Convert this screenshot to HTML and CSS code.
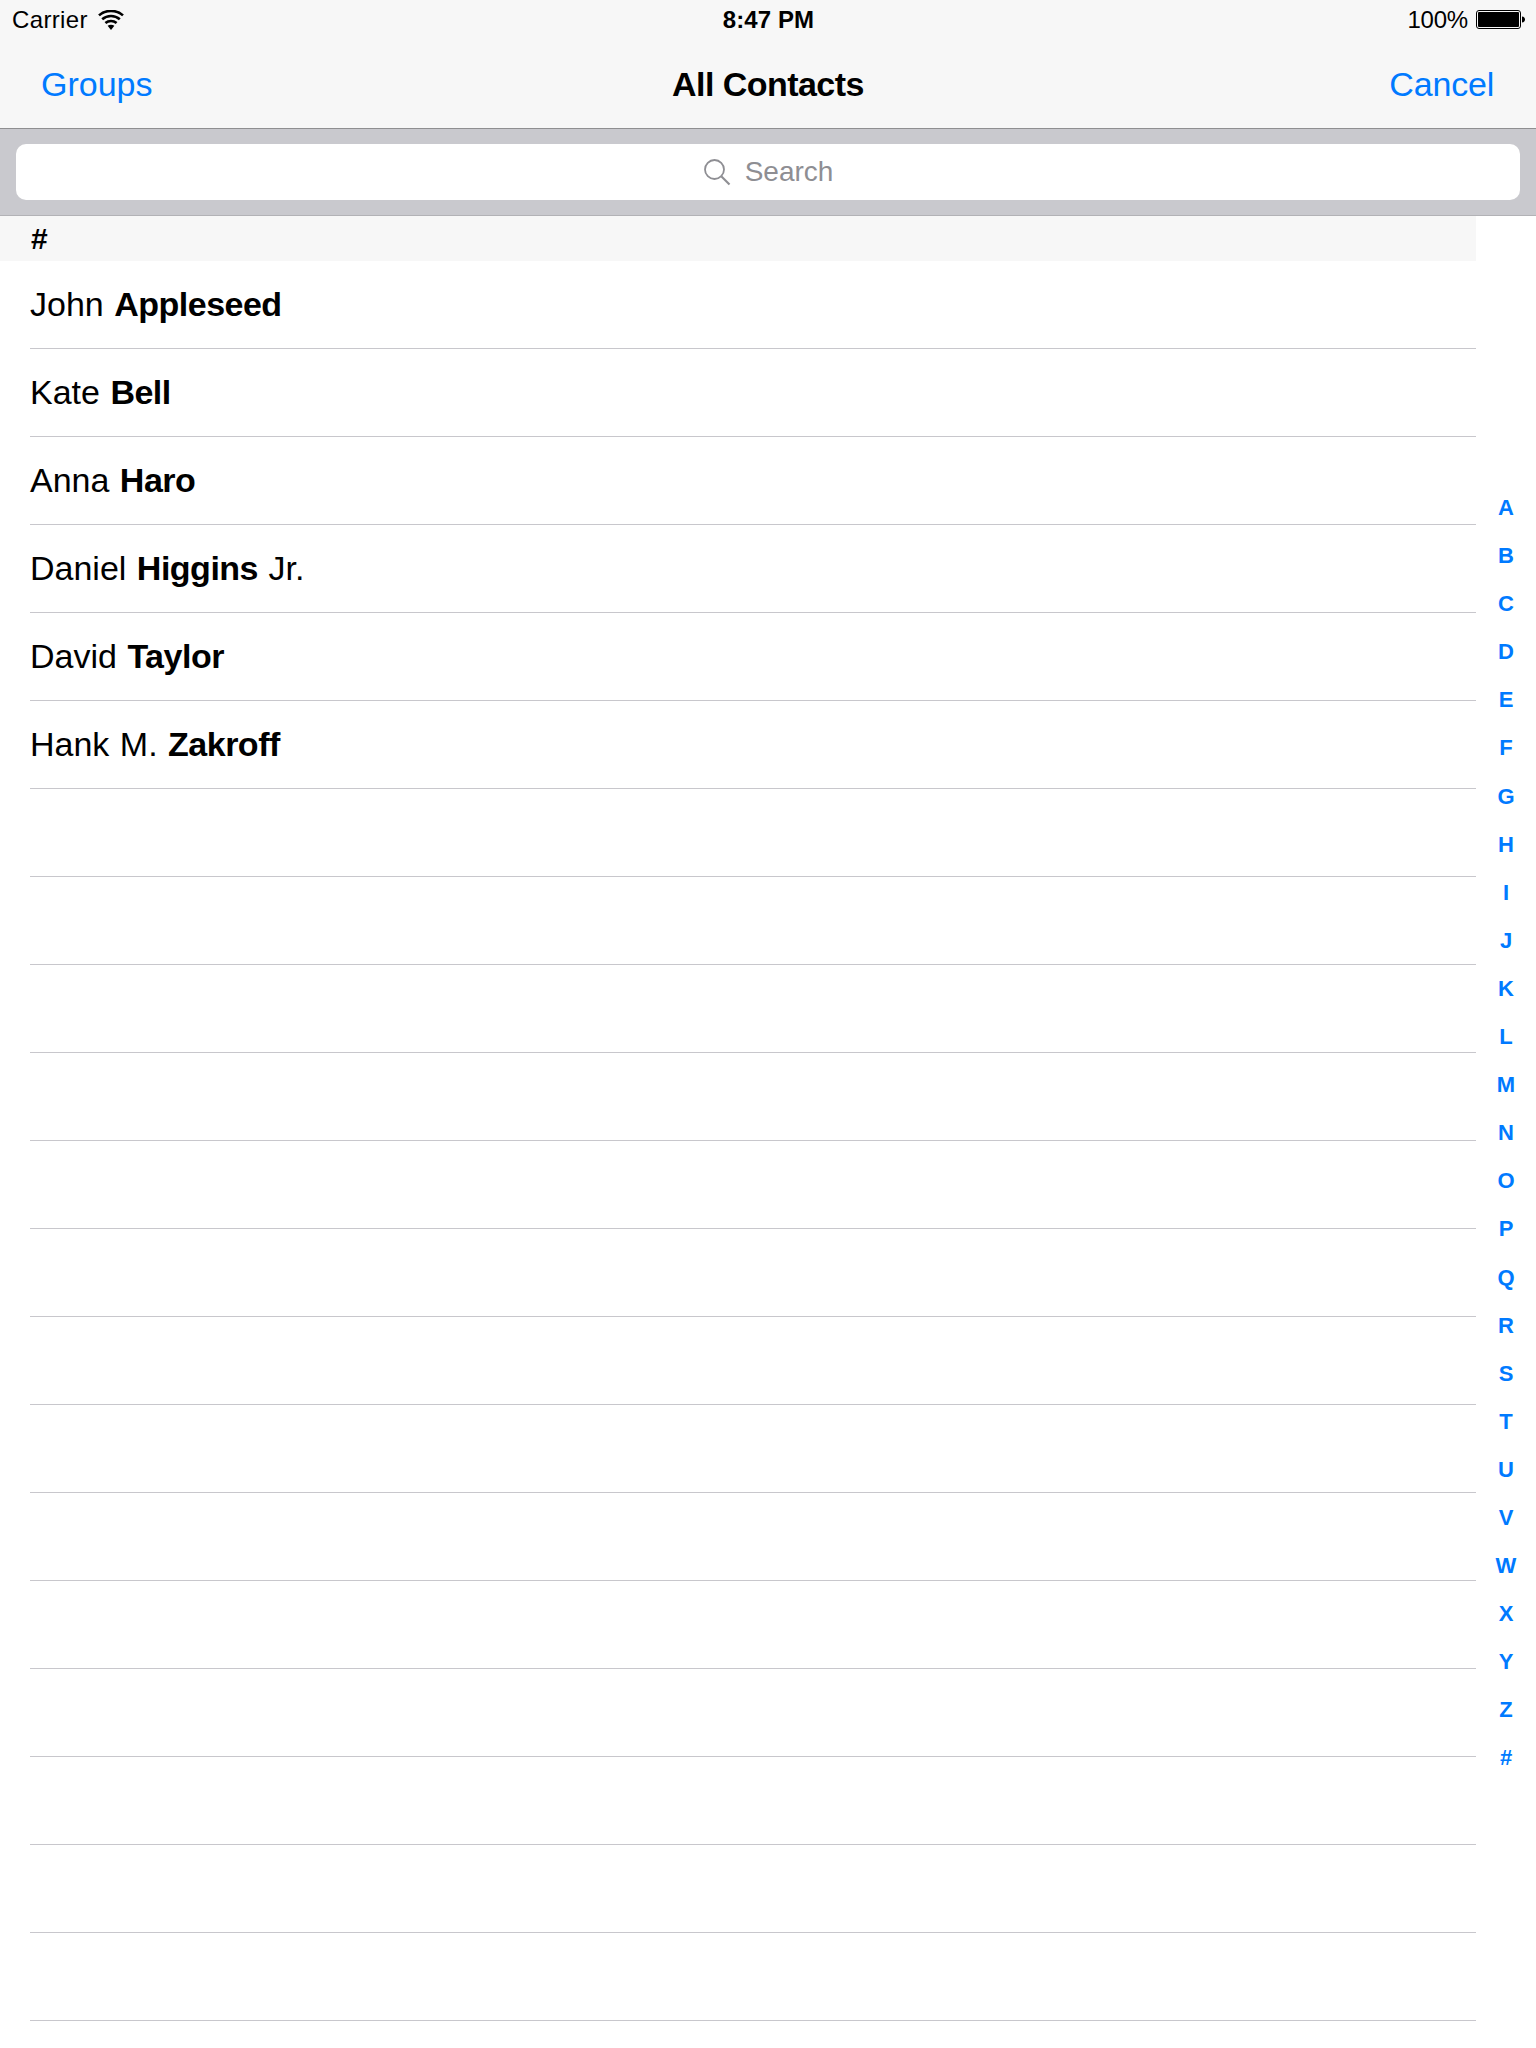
FILE: index.html
```html
<!DOCTYPE html>
<html lang="en">
<head>
<meta charset="utf-8">
<title>All Contacts</title>
<link rel="stylesheet" href="styles.css">
</head>
<body>
<div class="page">
  <header class="top">
    <div class="status">
      <div class="status-left">
        <span class="carrier">Carrier</span>
        <svg class="wifi" viewBox="0 0 26 20" width="26" height="20"><path d="M13 20 9.6 15.800C11.600 14.300 14.400 14.300 16.400 15.800Z" fill="#000"/><path d="M7.400 13C10.600 10.300 15.400 10.300 18.600 13" fill="none" stroke="#000" stroke-width="2.600"/><path d="M4.200 9.200C9.200 4.900 16.800 4.900 21.800 9.200" fill="none" stroke="#000" stroke-width="2.600"/><path d="M1 5.400C7.800 -.6 18.200 -.6 25 5.400" fill="none" stroke="#000" stroke-width="2.600"/></svg>
      </div>
      <div class="status-time">8:47 PM</div>
      <div class="status-right">
        <span class="percent">100%</span>
        <svg class="battery" viewBox="0 0 50 20" width="50" height="20"><rect x=".5" y=".5" width="44" height="18" rx="2.500" fill="none" stroke="#000"/><rect x="2" y="2" width="41" height="15" rx="1" fill="#000"/><path d="M46 6.500C48 6.500 49 8 49 9.500S48 12.500 46 12.500Z" fill="#000"/></svg>
      </div>
    </div>
    <nav class="nav">
      <a class="nav-link">Groups</a>
      <h1 class="nav-title">All Contacts</h1>
      <a class="nav-link cancel">Cancel</a>
    </nav>
  </header>
  <div class="searchbar">
    <div class="field">
      <svg class="glass" viewBox="0 0 28 28" width="28" height="28"><circle cx="11.500" cy="11.500" r="9.500" fill="none" stroke="#8e8e93" stroke-width="1.800"/><path d="M18.500 18.500 26.500 26.500" stroke="#8e8e93" stroke-width="2.200" fill="none"/></svg>
      <span>Search</span>
    </div>
  </div>
  <main class="list">
    <div class="section">#</div>
    <div class="row">John <b>Appleseed</b></div>
    <div class="row">Kate <b>Bell</b></div>
    <div class="row">Anna <b>Haro</b></div>
    <div class="row">Daniel <b>Higgins</b> Jr.</div>
    <div class="row">David <b>Taylor</b></div>
    <div class="row">Hank M. <b>Zakroff</b></div>
    <div class="row"></div><div class="row"></div><div class="row"></div><div class="row"></div>
    <div class="row"></div><div class="row"></div><div class="row"></div><div class="row"></div>
    <div class="row"></div><div class="row"></div><div class="row"></div><div class="row"></div>
    <div class="row"></div><div class="row"></div>
  </main>
  <aside class="index">
    <span>A</span><span>B</span><span>C</span><span>D</span><span>E</span><span>F</span><span>G</span><span>H</span><span>I</span><span>J</span><span>K</span><span>L</span><span>M</span><span>N</span><span>O</span><span>P</span><span>Q</span><span>R</span><span>S</span><span>T</span><span>U</span><span>V</span><span>W</span><span>X</span><span>Y</span><span>Z</span><span>#</span>
  </aside>
</div>
</body>
</html>
```

FILE: styles.css
```css
* { box-sizing: border-box; }
html, body { margin: 0; padding: 0; }
body { background: #fff; font-family: "Liberation Sans", Arial, sans-serif; color: #000; }
.page { position: relative; width: 1536px; height: 2048px; overflow: hidden; background: #fff; }

.top { height: 129px; background: #f7f7f7; border-bottom: 1px solid #8f8f91; }
.status { display: grid; grid-template-columns: 1fr auto 1fr; align-items: center; height: 40px; padding: 0 10px 0 12px; font-size: 24px; }
.status-left { display: flex; align-items: center; gap: 10px; }
.carrier { letter-spacing: .35px; }
.status-time { font-weight: 700; font-size: 24px; letter-spacing: .1px; margin-left: -1px; }
.status-right { display: flex; align-items: center; justify-content: flex-end; gap: 8px; }
.percent { letter-spacing: -.2px; }
.wifi { margin-top: -1px; }

.nav { display: flex; justify-content: space-between; align-items: center; height: 88px; padding: 0 42px 0 41px; }
.nav-link { color: #007aff; font-size: 34px; }
.cancel { letter-spacing: -.2px; }
.nav-title { margin: 0 0 0 -6px; font-size: 34px; font-weight: 700; letter-spacing: -.55px; }

.searchbar { height: 87px; padding: 15px 16px; background: #c9c9ce; border-bottom: 1px solid #b2b2b6; }
.field { display: flex; align-items: center; justify-content: center; gap: 14px; height: 56px; background: #fff; border-radius: 10px; color: #8e8e93; font-size: 28px; }

.section { height: 45px; width: 1476px; padding-left: 31px; background: #f7f7f7; font-size: 30px; font-weight: 700; line-height: 45px; }
.row { height: 88px; margin-left: 30px; width: 1446px; border-bottom: 1px solid #c8c7cc; font-size: 34px; line-height: 86px; word-spacing: 1px; }
.row b { letter-spacing: -.5px; }

.index { position: absolute; top: 484px; right: 0; width: 60px; display: flex; flex-direction: column; align-items: center; color: #007aff; font-size: 22px; font-weight: 700; }
.index span { height: 48.1px; line-height: 48px; }
```
